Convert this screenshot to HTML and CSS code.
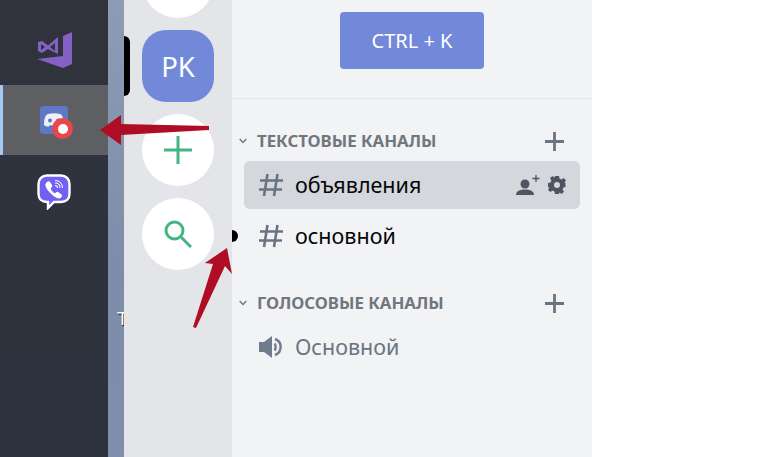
FILE: index.html
```html
<!DOCTYPE html>
<html lang="en">
<head>
    <meta charset="UTF-8">
    <meta name="viewport" content="width=device-width, initial-scale=1.0">
    <title>Discord</title>
    <link rel="stylesheet" href="styles.css">
</head>
<body>
    <div class="app">
        <div class="taskbar">
            <div class="task-item">
                <svg class="icon-vs" viewBox="0 0 36 38">
                    <path fill="#8661c5" d="M36 1 27 5V25L1 28 27 37 36 33Z"/>
                    <path fill="#8661c5" fill-rule="evenodd" d="M2 11 6 10 12 14.5 22 6V23L12 18 6 22 2 20ZM5 13V19L9 16ZM14 16 19 20V12Z"/>
                </svg>
            </div>
            <div class="task-item active">
                <div class="discord-app">
                    <svg class="icon-discord" viewBox="0 0 28 28">
                        <rect width="28" height="28" rx="3" fill="#5f77c4"/>
                        <path fill="#eef0f8" d="M4 19C4 14 5 9 8 8 12 7 16 7 20 8 23 9 24 14 24 20 21 22 19 21 18 19 15 20 13 20 10 19 9 21 7 21 4 19Z"/>
                        <circle cx="10" cy="14.500" r="2" fill="#5f77c4"/>
                        <circle cx="18" cy="14.500" r="2" fill="#5f77c4"/>
                    </svg>
                    <span class="rec-badge"></span>
                </div>
            </div>
            <div class="task-item">
                <svg class="icon-viber" viewBox="0 0 34 36">
                    <path fill="#7360f2" stroke="#fff" stroke-width="2.4" d="M10 1.5H24C29 1.5 32.5 5 32.5 10V20C32.5 25 29 28 24 28H17L11 34V28H10C5 28 1.5 25 1.5 20V10C1.5 5 5 1.5 10 1.5Z"/>
                    <path fill="#fff" d="M10 8C11 7 12 7 13 8L15 11C15.500 12 15 13 14 14 13.500 14.500 14 15.500 15 17 16.500 18.500 17.500 19.500 18.500 19 19.500 18 20.500 17.500 21.500 18.200L24.500 20.500C25.500 21.500 25 22.500 24 23.500 22.500 25 20 24.500 16.500 22 12.500 19 9.500 15 8.500 12 8 10 9 9 10 8Z"/>
                    <path fill="none" stroke="#fff" stroke-width="1.1" d="M18 6.500C22.500 6.500 25.500 9.500 25.500 14M18 9C21 9 23 11 23 14M18 11.500C19.500 11.500 20.500 12.500 20.500 14"/>
                </svg>
            </div>
        </div>

        <div class="wallpaper">
            <span class="stray-label">T</span>
        </div>

        <div class="guilds">
            <div class="guild guild-top"></div>
            <div class="guild guild-pk">PK</div>
            <div class="guild">
                <svg class="guild-icon" viewBox="0 0 28 28">
                    <path fill="none" stroke="#43b581" stroke-width="3" d="M14 0V28M0 14H28"/>
                </svg>
            </div>
            <div class="guild">
                <svg class="guild-icon" viewBox="0 0 28 28">
                    <circle cx="10.500" cy="10.500" r="8.500" fill="none" stroke="#43b581" stroke-width="3"/>
                    <path fill="none" stroke="#43b581" stroke-width="3" d="M16.500 16.500 27 27"/>
                </svg>
            </div>
        </div>

        <div class="channels">
            <div class="channels-top">
                <button class="search-btn">CTRL + K</button>
            </div>

            <div class="category first">
                <svg class="chevron" viewBox="0 0 8 6"><path fill="none" stroke="#72767d" stroke-width="1.400" d="M.7 1 4 4.500 7.300 1"/></svg>
                <span class="category-name">ТЕКСТОВЫЕ КАНАЛЫ</span>
                <svg class="category-add" viewBox="0 0 19 19"><path fill="none" stroke="#6a7480" stroke-width="2.800" d="M9.500 0V19M0 9.500H19"/></svg>
            </div>
            <div class="channel selected">
                <svg class="channel-icon" viewBox="0 0 24 24"><path fill="none" stroke="#6a7480" stroke-width="2.600" d="M8.500 1 5 23M18.500 1 15 23M1 7.500H24M0 16.500H23"/></svg>
                <span class="channel-name">объявления</span>
                <div class="channel-actions">
                    <svg class="icon-invite" viewBox="0 0 24 20">
                        <circle cx="9" cy="9" r="4.500" fill="#4f5660"/>
                        <path fill="#4f5660" d="M0 20C0 16 4 14.500 9 14.500S18 16 18 20Z"/>
                        <path fill="none" stroke="#4f5660" stroke-width="1.300" d="M20 0V7M16.500 3.500H23.500"/>
                    </svg>
                    <svg class="icon-gear" viewBox="0 0 18 18">
                        <path fill="#4f5660" fill-rule="evenodd" d="M7 0H11L11.500 2.500 13.500 3.400 15.700 2 18 4.300 16.600 6.500 17.500 7V11L15.500 11.500 14.600 13.500 16 15.700 13.700 18 11.500 16.600 11 18H7L6.500 15.500 4.500 14.600 2.300 16 0 13.700 1.400 11.500 0 11V7L2.500 6.500 3.400 4.500 2 2.300 4.300 0 6.500 1.400ZM9 6A3 3 0 1 0 9 12 3 3 0 1 0 9 6Z"/>
                    </svg>
                </div>
            </div>
            <div class="channel">
                <svg class="channel-icon" viewBox="0 0 24 24"><path fill="none" stroke="#6a7480" stroke-width="2.600" d="M8.500 1 5 23M18.500 1 15 23M1 7.500H24M0 16.500H23"/></svg>
                <span class="channel-name">основной</span>
            </div>

            <div class="category">
                <svg class="chevron" viewBox="0 0 8 6"><path fill="none" stroke="#72767d" stroke-width="1.400" d="M.7 1 4 4.500 7.300 1"/></svg>
                <span class="category-name">ГОЛОСОВЫЕ КАНАЛЫ</span>
                <svg class="category-add" viewBox="0 0 19 19"><path fill="none" stroke="#6a7480" stroke-width="2.800" d="M9.500 0V19M0 9.500H19"/></svg>
            </div>
            <div class="channel voice">
                <svg class="channel-icon" viewBox="0 0 24 24">
                    <path fill="#6f7c8c" d="M0 7H5L13 1V23L5 17H0Z"/>
                    <path fill="none" stroke="#6f7c8c" stroke-width="2.400" d="M15.500 8.500C17 10 17 14 15.500 15.500M16 4C23.500 6.500 23.500 17.500 16 20"/>
                </svg>
                <span class="channel-name">Основной</span>
            </div>
        </div>

        <div class="blank"></div>

        <div class="server-pill"></div>
        <div class="unread-pill"></div>

        <svg class="arrows" viewBox="0 0 779 457">
            <path fill="#b00d24" d="M209 126 209 130 121 135 121 145 100 130 121 115 121 124Z"/>
            <path fill="#b00d24" d="M227 248 232 274 225 266 196 328 193 327 213 264 205 263Z"/>
        </svg>
    </div>
</body>
</html>
```

FILE: styles.css
```css
* {
    box-sizing: border-box;
}

html, body {
    margin: 0;
    height: 100%;
    overflow: hidden;
}

body {
    font-family: "Noto Sans", "Open Sans", sans-serif;
    background-color: #fff;
}

.app {
    display: flex;
    position: relative;
    width: 779px;
    height: 457px;
    overflow: hidden;
}

/* taskbar */
.taskbar {
    width: 108px;
    flex-shrink: 0;
    padding-top: 15px;
    background: linear-gradient(to bottom, #30333b, #2c323e);
}

.task-item {
    height: 70px;
    display: flex;
    align-items: center;
    justify-content: center;
}

.task-item.active {
    background-color: #5d5f63;
    border-left: 3px solid #a5c8f5;
    padding-right: 3px;
}

.icon-vs {
    width: 36px;
    height: 38px;
}

.discord-app {
    position: relative;
    width: 28px;
    height: 28px;
}

.icon-discord {
    display: block;
    width: 28px;
    height: 28px;
}

.rec-badge {
    position: absolute;
    left: 12px;
    top: 12px;
    width: 21px;
    height: 21px;
    border-radius: 50%;
    background-color: #e8474c;
    display: flex;
    align-items: center;
    justify-content: center;
}

.rec-badge::after {
    content: "";
    width: 10px;
    height: 10px;
    border-radius: 50%;
    background-color: #fff;
}

.icon-viber {
    width: 34px;
    height: 36px;
    margin-top: 4px;
}

/* strip of desktop wallpaper */
.wallpaper {
    width: 16px;
    flex-shrink: 0;
    position: relative;
    overflow: hidden;
    background: linear-gradient(to bottom, #8c9cb6, #7d8ca8 60%, #7f8fab);
}

.stray-label {
    position: absolute;
    left: 9px;
    top: 309px;
    font-family: "Liberation Sans", sans-serif;
    font-size: 18px;
    line-height: 20px;
    color: #fff;
    text-shadow: 1px 1px 1px #000;
}

/* server list */
.guilds {
    width: 108px;
    flex-shrink: 0;
    display: flex;
    flex-direction: column;
    align-items: center;
    gap: 12px;
    background-color: #e3e5e8;
}

.guild {
    width: 72px;
    height: 72px;
    flex-shrink: 0;
    border-radius: 50%;
    background-color: #fff;
    display: flex;
    align-items: center;
    justify-content: center;
}

.guild-top {
    margin-top: -54px;
}

.guild-pk {
    border-radius: 24px;
    background-color: #7289da;
    color: #fff;
    font-size: 27.5px;
}

.guild-icon {
    width: 28px;
    height: 28px;
}

/* channel list */
.channels {
    width: 360px;
    flex-shrink: 0;
    padding: 0 12px;
    background-color: #f2f3f5;
}

.channels-top {
    height: 99px;
    margin: 0 -12px;
    padding-top: 12px;
    display: flex;
    justify-content: center;
    align-items: flex-start;
    border-bottom: 1px solid #e3e5e8;
}

.search-btn {
    width: 144px;
    height: 57px;
    border: none;
    border-radius: 4px;
    background-color: #7289da;
    color: #fff;
    font-family: inherit;
    font-size: 20px;
}

.category {
    display: flex;
    align-items: center;
    height: 24px;
    margin: 31px 0 8px;
    position: relative;
    padding-left: 13px;
}

.category.first {
    margin-top: 30px;
}

.chevron {
    position: absolute;
    left: -5px;
    top: 9px;
    width: 8px;
    height: 6px;
}

.category-name {
    font-size: 16.8px;
    font-weight: 700;
    color: #72767d;
    padding-bottom: 2px;
}

.category-add {
    width: 19px;
    height: 19px;
    margin-left: auto;
    margin-right: 16px;
}

.channel {
    display: flex;
    align-items: center;
    height: 48px;
    margin-bottom: 3px;
    padding: 0 14px 0 15px;
    border-radius: 6px;
    color: #060607;
    font-size: 21.5px;
}

.channel.selected {
    background-color: #d4d7dc;
}

.channel.voice {
    margin-top: 8px;
    color: #6a7480;
}

.channel-icon {
    width: 24px;
    height: 24px;
    margin-right: 12px;
    flex-shrink: 0;
}

.channel-name {
    padding-bottom: 2px;
}

.channel-actions {
    margin-left: auto;
    display: flex;
    align-items: center;
    gap: 8px;
}

.icon-invite {
    width: 24px;
    height: 20px;
}

.icon-gear {
    width: 18px;
    height: 18px;
}

.blank {
    flex: 1;
    background-color: #fff;
}

/* bits lying over the columns */
.server-pill {
    position: absolute;
    left: 124px;
    top: 36px;
    width: 6px;
    height: 60px;
    background-color: #000;
    border-radius: 0 6px 6px 0;
}

.unread-pill {
    position: absolute;
    left: 232px;
    top: 230px;
    width: 6px;
    height: 12px;
    background-color: #000;
    border-radius: 0 6px 6px 0;
}

.arrows {
    position: absolute;
    left: 0;
    top: 0;
    width: 779px;
    height: 457px;
}
```
